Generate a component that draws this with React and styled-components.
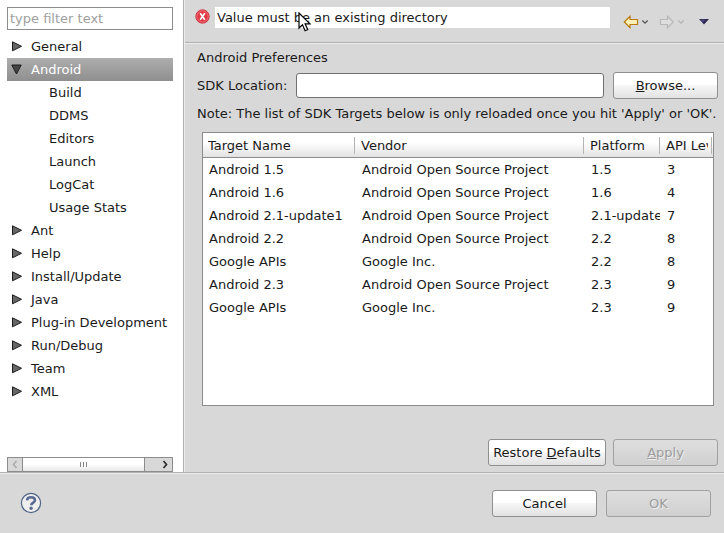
import styled, { createGlobalStyle } from "styled-components";

const tree = [
  { name: "General" },
  {
    name: "Android",
    open: true,
    children: ["Build", "DDMS", "Editors", "Launch", "LogCat", "Usage Stats"],
  },
  { name: "Ant" },
  { name: "Help" },
  { name: "Install/Update" },
  { name: "Java" },
  { name: "Plug-in Development" },
  { name: "Run/Debug" },
  { name: "Team" },
  { name: "XML" },
];

const targets = [
  ["Android 1.5", "Android Open Source Project", "1.5", "3"],
  ["Android 1.6", "Android Open Source Project", "1.6", "4"],
  ["Android 2.1-update1", "Android Open Source Project", "2.1-update", "7"],
  ["Android 2.2", "Android Open Source Project", "2.2", "8"],
  ["Google APIs", "Google Inc.", "2.2", "8"],
  ["Android 2.3", "Android Open Source Project", "2.3", "9"],
  ["Google APIs", "Google Inc.", "2.3", "9"],
];

function App() {
  return (
    <>
      <GlobalStyle />
      <StDialog>
        <StMain>
          <Sidebar />
          <StContent>
            <TitleBar />
            <Preferences />
          </StContent>
        </StMain>
        <Footer />
      </StDialog>
    </>
  );
}

function Sidebar() {
  return (
    <StSidebar>
      <StFilter aria-label="Filter" placeholder="type filter text" />
      <StTree>
        {tree.map((item) => (
          <li key={item.name}>
            <StTreeItem type="button" $selected={item.open} aria-expanded={!!item.open}>
              <TreeArrow open={item.open} />
              {item.name}
            </StTreeItem>
            {item.children && (
              <StSubTree>
                {item.children.map((child) => (
                  <li key={child}>
                    <StTreeItem type="button" $child>
                      {child}
                    </StTreeItem>
                  </li>
                ))}
              </StSubTree>
            )}
          </li>
        ))}
      </StTree>
      <StScrollbar>
        <StScrollButton type="button" aria-label="Scroll left" disabled>
          <svg width="6" height="9" viewBox="0 0 6 9">
            <path d="M4.5 1 1.5 4.5l3 3.5" fill="none" stroke="#aaa" strokeWidth="1.5" />
          </svg>
        </StScrollButton>
        <StThumb>
          <svg width="8" height="5" viewBox="0 0 8 5">
            <path d="M.5 0v5M3.5 0v5M6.5 0v5" stroke="#888" />
          </svg>
        </StThumb>
        <StScrollButton type="button" aria-label="Scroll right" $wide>
          <svg width="6" height="9" viewBox="0 0 6 9">
            <path d="M1.5 1l3 3.5-3 3.5" fill="none" stroke="#333" strokeWidth="1.8" />
          </svg>
        </StScrollButton>
      </StScrollbar>
    </StSidebar>
  );
}

function TreeArrow({ open }) {
  return (
    <svg width="12" height="12" viewBox="0 0 12 12">
      <path
        d={open ? "M.8 1h9.4L5.5 10z" : "M1.5 .8v9L10.5 5.3z"}
        fill={open ? "#444" : "#666"}
        stroke="#1c1c1c"
      />
    </svg>
  );
}

function TitleBar() {
  return (
    <StTitleBar>
      <ErrorIcon />
      <StMessage>
        Value must be an existing directory
        <Pointer />
      </StMessage>
      <StNav>
        <StNavButton type="button" aria-label="Back">
          <HistoryArrow />
        </StNavButton>
        <StNavButton type="button" aria-label="Forward" disabled>
          <HistoryArrow forward />
        </StNavButton>
        <StNavButton type="button" aria-label="Menu">
          <svg width="14" height="6" viewBox="0 0 14 6">
            <path d="M4 0h10L9 5.5z" fill="#2c2850" />
            <path d="M5.5.5h5L8 3.5z" fill="#4c4680" />
          </svg>
        </StNavButton>
      </StNav>
    </StTitleBar>
  );
}

function ErrorIcon() {
  return (
    <svg width="15" height="15" viewBox="0 0 15 15">
      <circle cx="7.5" cy="7.5" r="6.7" fill="#e23845" stroke="#cc3a46" />
      <circle cx="7.5" cy="7.5" r="5.6" fill="none" stroke="#f07a84" strokeWidth=".8" />
      <path d="M5.2 4.2l4.6 6.6M9.8 4.2l-4.6 6.6" stroke="#fff" strokeWidth="1.7" />
    </svg>
  );
}

function Pointer() {
  return (
    <StPointer width="13" height="20" viewBox="0 0 13 20">
      <path
        d="M1 1v15l3.5-3.3 2.6 6 2.6-1.2-2.6-5.7H12z"
        fill="#fff"
        stroke="#000"
        strokeWidth="1.2"
      />
    </StPointer>
  );
}

function HistoryArrow({ forward }) {
  return (
    <svg width="26" height="14" viewBox="0 0 26 14">
      <path
        d={
          forward
            ? "M14.2 7 8.5 1.3v3.2h-7v5h7v3.2z"
            : "M1.3 7l5.7-5.7v3.2h7.5v5H7v3.2z"
        }
        fill={forward ? "#dedede" : "#fff0b4"}
        stroke={forward ? "#b8b8b8" : "#b87a10"}
        strokeWidth="1.2"
      />
      <path
        d="M19.3 5.5l2.7 2.7 2.7-2.7"
        fill="none"
        stroke={forward ? "#b4b4b4" : "#555"}
        strokeWidth="1.3"
      />
    </svg>
  );
}

function Preferences() {
  return (
    <StPage>
      <StHeading>Android Preferences</StHeading>
      <StLocation>
        <label htmlFor="sdk">SDK Location:</label>
        <StInput id="sdk" />
        <StButton type="button">
          <u>B</u>rowse...
        </StButton>
      </StLocation>
      <StNote>
        Note: The list of SDK Targets below is only reloaded once you hit 'Apply' or 'OK'.
      </StNote>
      <StTableBox>
        <StTable>
          <colgroup>
            <col width="152" />
            <col />
            <col width="76" />
            <col width="53" />
          </colgroup>
          <thead>
            <tr>
              <th><span>Target Name</span></th>
              <th><span>Vendor</span></th>
              <th><span>Platform</span></th>
              <th><span>API Level</span></th>
            </tr>
          </thead>
          <tbody>
            {targets.map((row, idx) => (
              <tr key={idx}>
                {row.map((cell, i) => (
                  <td key={i}>{cell}</td>
                ))}
              </tr>
            ))}
          </tbody>
        </StTable>
      </StTableBox>
      <StActions>
        <StButton type="button" $wide>
          Restore <u>D</u>efaults
        </StButton>
        <StButton type="button" disabled>
          <u>A</u>pply
        </StButton>
      </StActions>
    </StPage>
  );
}

function Footer() {
  return (
    <StFooter>
      <StHelp type="button" aria-label="Help">
        <svg width="22" height="22" viewBox="0 0 22 22">
          <circle cx="11" cy="11" r="9.6" fill="#efefef" stroke="#506488" strokeWidth="1.2" />
          <path
            d="M7 8.3c.2-2 1.8-3 4-3s4 1 4 3c0 2.2-3.8 2.4-3.8 5"
            fill="none"
            stroke="#5a6c94"
            strokeWidth="2.6"
          />
          <circle cx="11.1" cy="16.2" r="1.7" fill="#5a6c94" />
        </svg>
      </StHelp>
      <StButton type="button">Cancel</StButton>
      <StButton type="button" disabled>
        OK
      </StButton>
    </StFooter>
  );
}

const GlobalStyle = createGlobalStyle`
  * {
    box-sizing: border-box;
  }
  body {
    margin: 0;
    background: #d8d8d8;
  }
  body, button, input {
    font: 13px/23px "DejaVu Sans", sans-serif;
    color: #1a1a1a;
  }
  svg {
    display: block;
    flex: none;
  }
`;

const StDialog = styled.div`
  display: flex;
  flex-direction: column;
  min-height: 100vh;
`;

const StMain = styled.div`
  flex: 1;
  display: flex;
`;

const StSidebar = styled.aside`
  flex: none;
  width: 184px;
  display: flex;
  flex-direction: column;
  padding: 7px 10px 0 7px;
  background: #fff;
  border-right: 1px solid #b0b0b0;
`;

const StFilter = styled.input`
  height: 23px;
  margin: 0 0 5px;
  padding: 0 2px;
  border: 1px solid #8c8c8c;
  outline: none;

  &::placeholder {
    color: #a0a0a0;
    opacity: 1;
  }
`;

const StTree = styled.ul`
  flex: 1;
  margin: 0 0 10px;
  padding: 0;
  list-style: none;
`;

const StSubTree = styled.ul`
  margin: 0;
  padding: 0;
  list-style: none;
`;

const StTreeItem = styled.button`
  width: 100%;
  height: 23px;
  display: flex;
  align-items: center;
  gap: 8px;
  padding: 0 0 0 ${({ $child }) => ($child ? 42 : 4)}px;
  border: 0;
  white-space: nowrap;
  color: ${({ $selected }) => ($selected ? "#fff" : "#1a1a1a")};
  background: ${({ $selected }) =>
    $selected ? "linear-gradient(#adadad, #8f8f8f)" : "none"};
`;

const StScrollbar = styled.div`
  display: flex;
  height: 15px;
  border: 1px solid #8c8c8c;
  background: #d8d8d8;
`;

const StScrollButton = styled.button`
  width: ${({ $wide }) => ($wide ? 27 : 14)}px;
  display: flex;
  align-items: center;
  justify-content: ${({ $wide }) => ($wide ? "flex-end" : "center")};
  padding: 0 4px;
  border: 0;
  background: none;
`;

const StThumb = styled.div`
  flex: 1;
  display: flex;
  align-items: center;
  justify-content: center;
  border: solid #8c8c8c;
  border-width: 0 1px;
  background: linear-gradient(#fff 50%, #e6e6e6);
`;

const StContent = styled.main`
  flex: 1;
  min-width: 0;
  display: flex;
  flex-direction: column;
  border-left: 1px solid #ececec;
`;

const StTitleBar = styled.header`
  display: flex;
  align-items: flex-start;
  gap: 5px;
  height: 43px;
  padding: 7px 15px 0 10px;
  border-bottom: 1px solid #b0b0b0;
  box-shadow: 0 1px #ececec;

  & > svg {
    margin-top: 2px;
  }
`;

const StMessage = styled.div`
  position: relative;
  flex: 1;
  height: 21px;
  padding-left: 2px;
  line-height: 21px;
  background: #fff;
`;

const StPointer = styled.svg`
  position: absolute;
  left: 83px;
  top: 5px;
`;

const StNav = styled.nav`
  display: flex;
  gap: 10px;
  padding: 8px 0 0 8px;
`;

const StNavButton = styled.button`
  display: flex;
  align-items: center;
  height: 14px;
  padding: 0;
  border: 0;
  background: none;
`;

const StPage = styled.section`
  flex: 1;
  display: flex;
  flex-direction: column;
  padding: 3px 6px 6px 12px;
`;

const StHeading = styled.h1`
  margin: 0 0 3px;
  font-size: 13px;
  font-weight: normal;
`;

const StLocation = styled.div`
  display: flex;
  align-items: center;
  gap: 9px;
`;

const StInput = styled.input`
  flex: 1;
  min-width: 0;
  height: 25px;
  padding: 0 4px;
  border: 1px solid #707070;
  border-radius: 3px;
  outline: none;
`;

const StButton = styled.button`
  width: ${({ $wide }) => ($wide ? 118 : 105)}px;
  height: 27px;
  padding: 0;
  border: 1px solid #8f8f8f;
  border-radius: 3px;
  background: linear-gradient(#fff 48%, #f6f6f6 50%, #e2e2e2);
  white-space: nowrap;

  &:disabled {
    color: #9c9c9c;
    text-shadow: 1px 1px #efefef;
    border-color: #a0a0a0;
    background: linear-gradient(#dedede, #d0d0d0);
  }
`;

const StNote = styled.p`
  margin: 3px 0 7px;
  white-space: nowrap;
`;

const StTableBox = styled.div`
  flex: 1;
  margin: 0 4px 33px 5px;
  border: 1px solid #8c8c8c;
  background: #fff;
  overflow: hidden;
`;

const StTable = styled.table`
  width: 100%;
  table-layout: fixed;
  border-collapse: separate;
  border-spacing: 0;

  & th {
    height: 25px;
    padding: 4px 0 3px;
    border-bottom: 1px solid #8c8c8c;
    background: linear-gradient(#fff 40%, #e2e2e2);
    font-weight: normal;
    line-height: 17px;
    text-align: left;
  }
  & th span {
    display: block;
    padding: 0 3px 0 5px;
    border-right: 1px solid #b4b4b4;
    white-space: nowrap;
    overflow: clip;
    overflow-clip-margin: content-box;
  }
  & td {
    height: 23px;
    padding: 0 0 0 6px;
    white-space: nowrap;
    overflow: hidden;
  }
  & th + th span {
    padding-left: 6px;
  }
  & td + td {
    padding-left: 7px;
  }
  & th:last-child {
    padding-right: 1px;
  }
`;

const StActions = styled.div`
  display: flex;
  justify-content: flex-end;
  gap: 7px;
`;

const StFooter = styled.footer`
  flex: none;
  height: 61px;
  display: flex;
  align-items: center;
  gap: 9px;
  padding: 0 13px 0 20px;
  border-top: 1px solid #b0b0b0;
  box-shadow: inset 0 1px #ececec;
`;

const StHelp = styled.button`
  margin-right: auto;
  padding: 0;
  border: 0;
  background: none;
`;

export default App;
